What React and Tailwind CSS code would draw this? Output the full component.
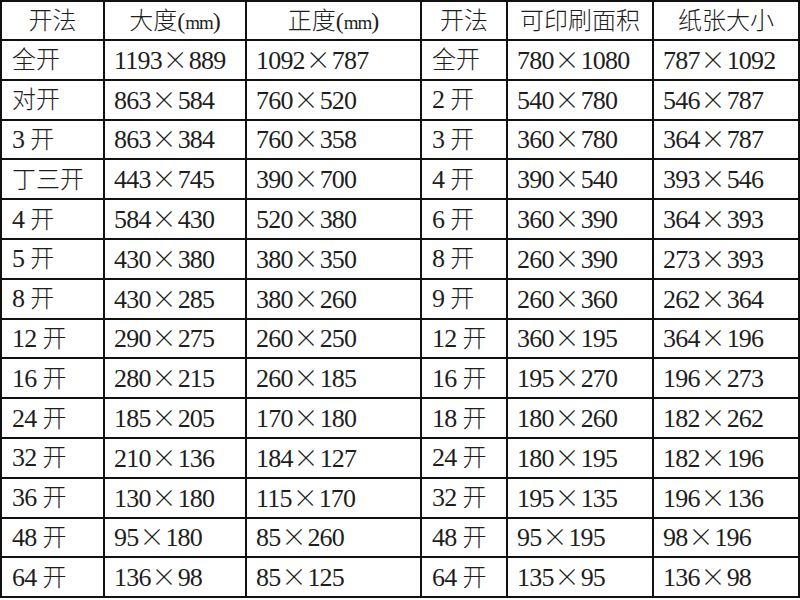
const rows = [
  ['全开', '1193×889', '1092×787', '全开', '780×1080', '787×1092'],
  ['对开', '863×584', '760×520', '2 开', '540×780', '546×787'],
  ['3 开', '863×384', '760×358', '3 开', '360×780', '364×787'],
  ['丁三开', '443×745', '390×700', '4 开', '390×540', '393×546'],
  ['4 开', '584×430', '520×380', '6 开', '360×390', '364×393'],
  ['5 开', '430×380', '380×350', '8 开', '260×390', '273×393'],
  ['8 开', '430×285', '380×260', '9 开', '260×360', '262×364'],
  ['12 开', '290×275', '260×250', '12 开', '360×195', '364×196'],
  ['16 开', '280×215', '260×185', '16 开', '195×270', '196×273'],
  ['24 开', '185×205', '170×180', '18 开', '180×260', '182×262'],
  ['32 开', '210×136', '184×127', '24 开', '180×195', '182×196'],
  ['36 开', '130×180', '115×170', '32 开', '195×135', '196×136'],
  ['48 开', '95×180', '85×260', '48 开', '95×195', '98×196'],
  ['64 开', '136×98', '85×125', '64 开', '135×95', '136×98'],
];

const widths = ['w-[103px]', 'w-[142px]', 'w-[175px]', 'w-[86px]', 'w-[146px]', 'w-[146px]'];

// CJK glyphs sit in their own span so the Latin serif keeps the digits
function Han({ children, className = '' }) {
  return <span className={`font-['Noto_Sans_CJK_SC',sans-serif] font-[300] text-[24px] tracking-normal ${className}`}>{children}</span>;
}

function Size({ text }) {
  const [a, b] = text.split('×');
  return (
    <span>
      {a}
      <span className="inline-block px-[1px] font-['Noto_Sans_CJK_SC'] font-[300] text-[25px] tracking-normal">×</span>
      {b}
    </span>
  );
}

function Kai({ text }) {
  const parts = text.split(' ');
  if (parts.length === 1) return <Han>{text}</Han>;
  return (
    <span>
      {parts[0]}
      <Han className="ml-[6px]">{parts[1]}</Han>
    </span>
  );
}

export default function App() {
  return (
    <div className="w-[800px] h-[600px] bg-white overflow-hidden">
      <table className="table-fixed border-collapse w-[798px] text-[#1e1e1e] font-['Liberation_Serif','Noto_Sans_CJK_SC',serif] text-[26px] tracking-[-0.8px] leading-none">
        <colgroup>
          {widths.map((w, i) => <col key={i} className={w} />)}
        </colgroup>
        <thead>
          <tr className="h-[39px]">
            {['开法', '大度', '正度', '开法', '可印刷面积', '纸张大小'].map((h, i) => (
              <th key={i} className="border-2 border-[#111] font-normal text-center px-1">
                <Han>{h}</Han>
                {(i === 1 || i === 2) && (
                  <span className="text-[24px] tracking-normal">(<span className="inline-block text-[19px] tracking-[-1px]">mm</span>)</span>
                )}
              </th>
            ))}
          </tr>
        </thead>
        <tbody>
          {rows.map((r, ri) => (
            <tr key={ri} className="h-[39.8px]">
              {r.map((c, ci) => (
                <td key={ci} className={`border-2 border-[#111] text-left ${ci === 0 || ci === 3 ? 'pl-[10px]' : 'pl-[9px]'} whitespace-nowrap`}>
                  {c.includes('×') ? <Size text={c} /> : <Kai text={c} />}
                </td>
              ))}
            </tr>
          ))}
        </tbody>
      </table>
    </div>
  );
}
